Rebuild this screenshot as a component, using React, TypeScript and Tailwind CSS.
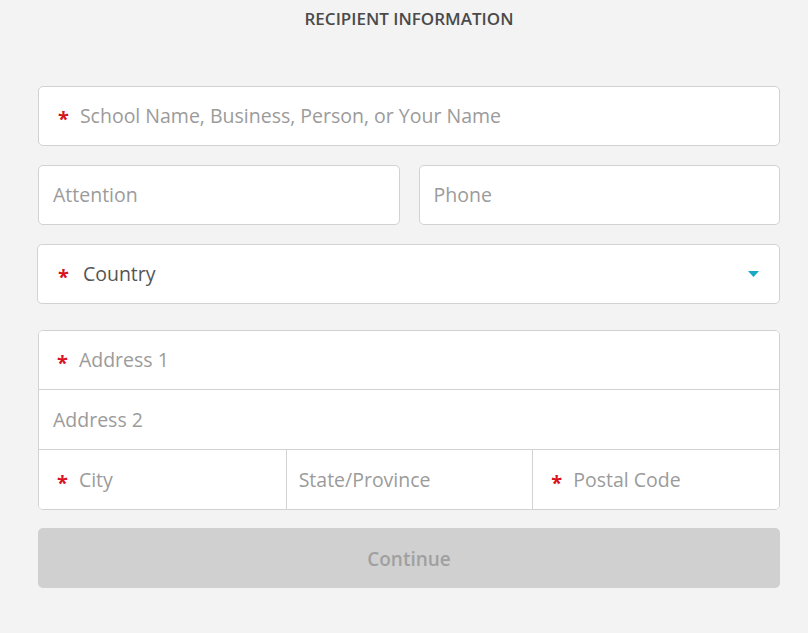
import React from 'react';

const Req = ({ gap = 'mr-[11px]' }: { gap?: string }) => (
  <span className={`${gap} relative top-[3px] text-[20px] font-bold leading-none text-[#d8121f]`}>*</span>
);

interface FieldProps {
  label: string;
  required?: boolean;
  // height + padding + borders, passed in whole so no classes clash
  className: string;
}

const Field: React.FC<FieldProps> = ({ label, required, className }) => (
  <div className={`flex items-center bg-white ${className}`}>
    {required && <Req />}
    <span className="text-[19.5px] text-[#9b9b9b]">{label}</span>
  </div>
);

const App: React.FC = () => {
  return (
    <div className="min-h-[633px] w-full bg-[#f3f3f3] font-['Open_Sans',sans-serif]">
      <div className="ml-[38px] w-[742px] pt-[7px]">
        <h2 className="h-[24px] text-center text-[17px] font-semibold leading-[24px] text-[#4a4a4a]">
          RECIPIENT INFORMATION
        </h2>

        <div className="mt-[55px] flex flex-col">
          <Field label="School Name, Business, Person, or Your Name" required className="h-[60px] rounded-[5px] border border-[#d2d2d2] pl-[19px]" />

          <div className="mt-[19px] grid grid-cols-2 gap-[19px]">
            <Field label="Attention" className="h-[60px] rounded-[5px] border border-[#d2d2d2] pl-[14px]" />
            <Field label="Phone" className="h-[60px] rounded-[5px] border border-[#d2d2d2] pl-[14px]" />
          </div>

          <div className="-ml-px mt-[19px] flex h-[60px] w-[743px] items-center justify-between rounded-[5px] border border-[#d2d2d2] bg-white pl-[20px] pr-[20px]">
            <div className="flex items-center">
              <Req gap="mr-[14px]" />
              <span className="text-[19.5px] text-[#555555]">Country</span>
            </div>
            <svg width="11" height="6" viewBox="0 0 11 6">
              <path d="M0 0 H11 L5.5 6 Z" fill="#1ba8c6" />
            </svg>
          </div>

          <div className="mt-[26px] overflow-hidden rounded-[5px] border border-[#d2d2d2] bg-white">
            <Field label="Address 1" required className="h-[58px] pl-[18px]" />
            <Field label="Address 2" className="h-[60px] border-t border-[#d2d2d2] pl-[14px]" />
            <div className="grid h-[60px] grid-cols-3 border-t border-[#d2d2d2]">
              <Field label="City" required className="h-[59px] pl-[18px]" />
              <Field label="State/Province" className="h-[59px] border-l border-[#d2d2d2] pl-[12px]" />
              <Field label="Postal Code" required className="h-[59px] border-l border-[#d2d2d2] pl-[18px]" />
            </div>
          </div>

          <button
            type="button"
            disabled
            className="mt-[18px] h-[60px] w-full rounded-[5px] bg-[#d0d0d0] pt-[2px] text-[19px] font-semibold text-[#a0a0a0]"
          >
            Continue
          </button>
        </div>
      </div>
    </div>
  );
};

export default App;
